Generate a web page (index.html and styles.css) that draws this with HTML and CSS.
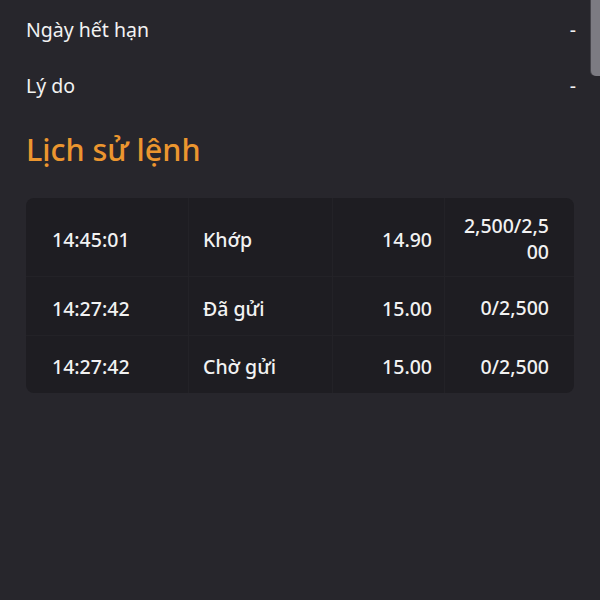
FILE: index.html
```html
<!DOCTYPE html>
<html lang="vi">
<head>
  <meta charset="UTF-8">
  <meta name="viewport" content="width=device-width, initial-scale=1.0">
  <title>Lịch sử lệnh</title>
  <link rel="stylesheet" href="styles.css">
</head>
<body>
  <div class="scrollbar"></div>

  <div class="info-row">
    <span class="label">Ngày hết hạn</span>
    <span class="value">-</span>
  </div>
  <div class="info-row">
    <span class="label">Lý do</span>
    <span class="value">-</span>
  </div>

  <h2 class="title">Lịch sử lệnh</h2>

  <table class="history">
    <tr class="row-first">
      <td class="time">14:45:01</td>
      <td class="status">Khớp</td>
      <td class="price">14.90</td>
      <td class="qty">2,500/2,500</td>
    </tr>
    <tr class="row-second">
      <td class="time">14:27:42</td>
      <td class="status">Đã gửi</td>
      <td class="price">15.00</td>
      <td class="qty">0/2,500</td>
    </tr>
    <tr>
      <td class="time">14:27:42</td>
      <td class="status">Chờ gửi</td>
      <td class="price">15.00</td>
      <td class="qty">0/2,500</td>
    </tr>
  </table>
</body>
</html>
```

FILE: styles.css
```css
html,
body {
  margin: 0;
  height: 100%;
}

body {
  background: #27262c;
  color: #f2f2f2;
  font-family: "Noto Sans", "Open Sans", sans-serif;
  padding: 0 26px 0 26px;
  position: relative;
  overflow: hidden;
}

.scrollbar {
  position: absolute;
  top: -10px;
  right: 0;
  width: 9px;
  height: 86px;
  background: #7c7b82;
  border-radius: 5px 0 0 5px;
  box-shadow: -1px 0 0 #45444a;
}

.info-row {
  display: flex;
  justify-content: space-between;
  align-items: center;
  height: 54px;
  font-size: 19.5px;
  margin-top: 2px;
}

.info-row:first-of-type {
  height: 60px;
}

.info-row .value {
  margin-right: -2px;
}

.title {
  margin: 9px 0 21px 0;
  color: #ec962f;
  font-size: 30.5px;
  font-weight: 500;
  line-height: 56px;
}

.history {
  width: 548px;
  table-layout: fixed;
  border-collapse: separate;
  border-spacing: 0;
  background: #1e1d22;
  border-radius: 8px;
  overflow: hidden;
  font-size: 19.5px;
  font-weight: 500;
}

.history td {
  box-sizing: border-box;
  border-right: 1px solid #232227;
  border-bottom: 1px solid #232227;
  height: 57px;
  padding: 4px 0 0 0;
}

.history tr.row-first td {
  height: 79px;
}

.history tr.row-second td {
  height: 59px;
}

.history tr:last-child td {
  border-bottom: none;
}

.history td:last-child {
  border-right: none;
}

.history .time {
  width: 163px;
  padding-left: 26px;
}

.history .status {
  width: 144px;
  padding-left: 14px;
}

.history .price {
  width: 112px;
  text-align: right;
  padding-right: 12px;
}

.history .qty {
  width: 129px;
  text-align: right;
  padding-right: 25px;
  padding-left: 14px;
  word-break: break-all;
  line-height: 26px;
}
```
